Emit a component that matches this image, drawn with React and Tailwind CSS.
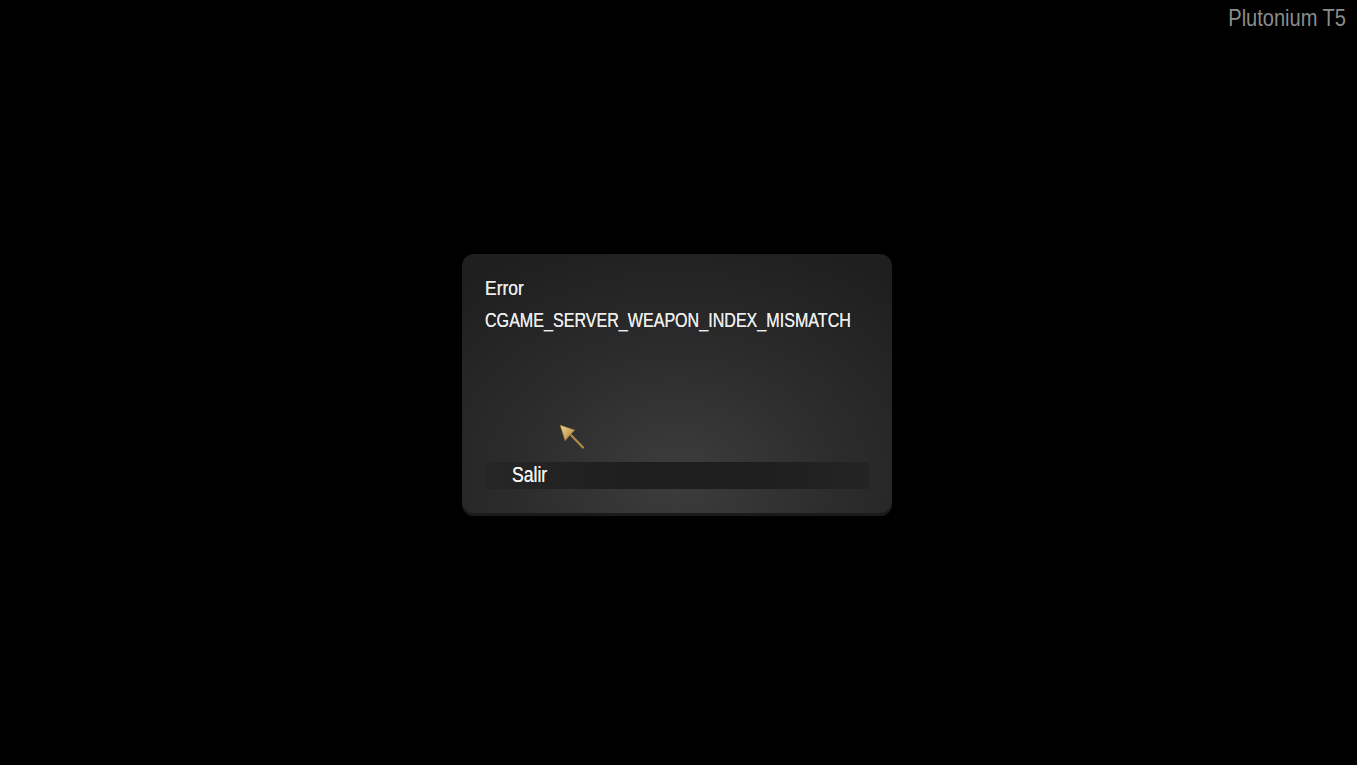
import React from 'react';

const Cursor = () => (
  <svg width="30" height="30" viewBox="0 0 30 30" className="absolute left-[558px] top-[422px]">
    <defs>
      <linearGradient id="gold" x1="0" y1="0" x2="1" y2="1">
        <stop offset="0" stopColor="#f5d996" />
        <stop offset="1" stopColor="#a57a36" />
      </linearGradient>
    </defs>
    <line x1="11" y1="11" x2="25" y2="25.5" stroke="#b08945" strokeWidth="2.2" strokeLinecap="round" />
    <path d="M2 3 L17 8 L12.5 12.5 L7 19 Z" fill="url(#gold)" stroke="#75562a" strokeWidth="0.6" strokeLinejoin="round" />
  </svg>
);

export default function App() {
  return (
    <div className="relative w-full h-[765px] bg-black overflow-hidden font-['Liberation_Sans',Arial,sans-serif]">
      <div className="absolute right-[11px] top-[3px] text-[24px] text-[#8c8c8c] leading-[30px] origin-right scale-x-[0.835]">Plutonium T5</div>

      <div className="flex h-full items-center justify-center">
        <div className="w-[430px] h-[262px] mt-[4px] -ml-[3px] rounded-[12px] flex flex-col pl-[23px] pr-[23px] pt-[22px] pb-[27px] shadow-[inset_0_-3px_0_#1a1a1a] bg-[radial-gradient(ellipse_75%_95%_at_50%_85%,#3d3d3d_0%,#2c2c2c_50%,#1f1f1f_100%)]">
          <div className="text-[21px] leading-[24px] text-[#ececec] origin-left scale-x-[0.83] [text-shadow:0_0_0.6px_#ececec]">Error</div>
          <div className="text-[21px] leading-[24px] text-[#ececec] mt-[8px] whitespace-nowrap origin-left scale-x-[0.766] [text-shadow:0_0_0.6px_#ececec]">CGAME_SERVER_WEAPON_INDEX_MISMATCH</div>
          <div className="flex-1" />
          <button type="button" className="h-[27px] w-full flex items-center pl-[27px] bg-[linear-gradient(90deg,#262626,#1e1e1e_40%,#1e1e1e_70%,#242424)]">
            <span className="text-[22px] leading-[26px] text-[#f2f2f2] origin-left scale-x-[0.8] [text-shadow:0_0_0.6px_#f2f2f2]">Salir</span>
          </button>
        </div>
      </div>

      <Cursor />
    </div>
  );
}
